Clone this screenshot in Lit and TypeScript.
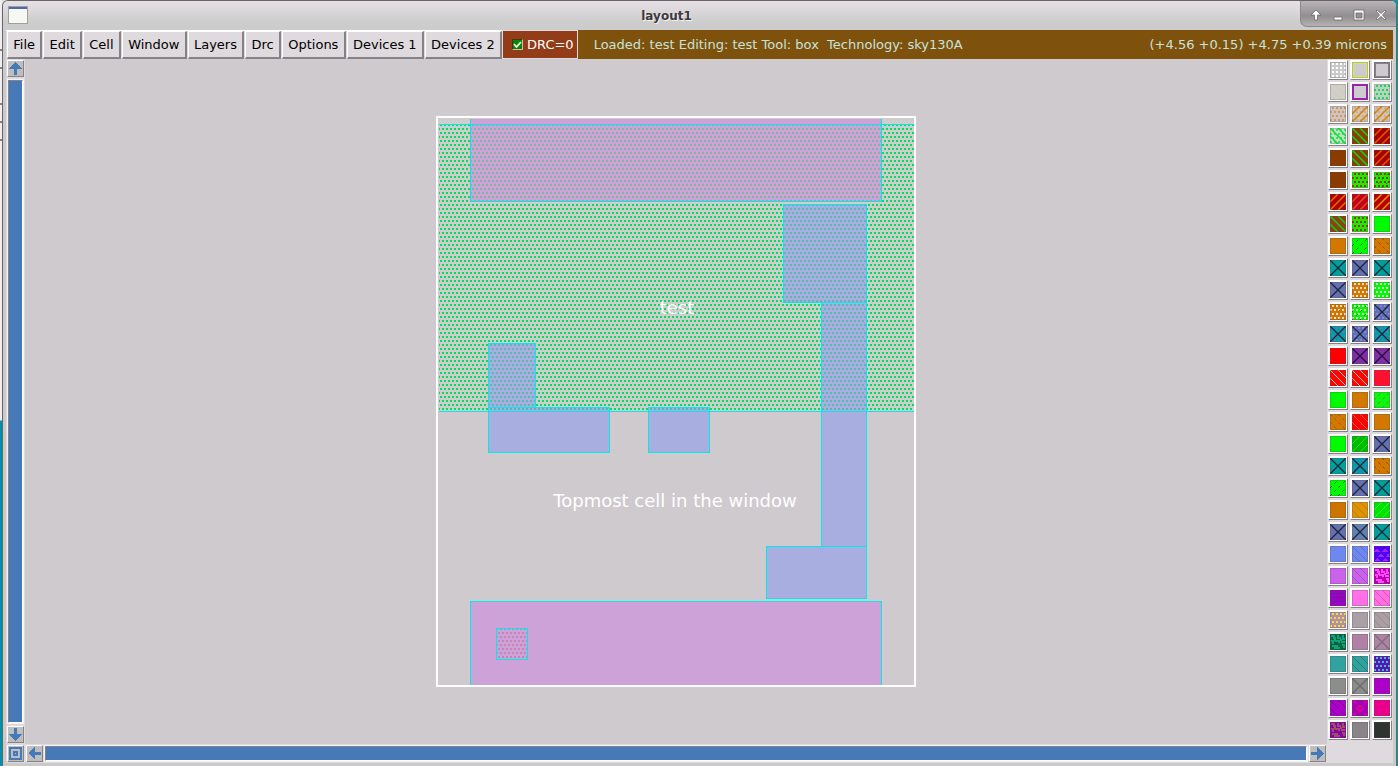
import { LitElement, html, svg, css } from "lit";
import { customElement, state } from "lit/decorators.js";

type Kind =
  | "solid" | "dots" | "grid" | "back" | "fwd" | "cross" | "frame" | "dashFwd" | "dashBack"
  | "xdots" | "fwdDots" | "backDots" | "tri" | "bars" | "ring" | "maze" | "dotDash";
type Swatch = [string, Kind?, string?, string?];

const GREY = "#cfcace";
const TEAL = "#00a09c";
const BLUE = "#6670b0";
const ORANGE = "#d07800";
const GREEN = "#00fa00";
const INK = "#1c2438";

// Background, pattern, pattern colour, and either a second colour or "bold" for wide hatching.
const LAYERS: Swatch[] = [
  ["#cacaca", "grid", "#ffffff"], [GREY, "frame", "#d2e86a"], [GREY, "frame", "#85808a"],
  ["#cfcccc", "back", "#d8dca0"], [GREY, "frame", "#a21cc0"], ["#c4cec4", "dots", "#00e650"],
  ["#cfc4c0", "dots", "#d09a62"], ["#cfc4bc", "fwdDots", "#d88000", "#d6ac84"], ["#cfc4bc", "fwdDots", "#d88000", "#d6ac84"],
  ["#c8dcc8", "backDots", "#00e828", "#30e860"], ["#903c00", "back", "#00e010", "bold"], ["#aa0000", "fwd", "#d86000", "bold"],
  ["#8a3c00"], ["#903c00", "back", "#00e010", "bold"], ["#aa0000", "fwd", "#d86000", "bold"],
  ["#8a3c00"], [GREEN, "dots", "#ee1000"], [GREEN, "dotDash", "#d81800", "#307000"],
  ["#b00000", "fwd", "#e07000", "bold"], ["#c40018", "fwd", "#dc5018", "bold"], ["#b80000", "fwd", "#f09400", "bold"],
  ["#904010", "back", "#00d818", "bold"], [GREEN, "dots", "#ee1000"], [GREEN],
  [ORANGE], [GREEN, "dashFwd", "#106800"], [ORANGE, "dashBack", "#904800"],
  [TEAL, "cross", INK], [BLUE, "cross", INK], [TEAL, "cross", INK],
  [BLUE, "cross", INK], [ORANGE, "dots", "#f0dccc"], [GREEN, "dots", "#d8f4d8"],
  [ORANGE, "dotDash", "#f0dccc", "#a85800"], [GREEN, "dotDash", "#f0d8d8", "#108000"], [BLUE, "xdots", INK, "#7488e8"],
  [TEAL, "xdots", INK, "#5078d8"], [BLUE, "xdots", INK, "#7488e8"], [TEAL, "xdots", INK, "#5078d8"],
  ["#ff0000"], ["#8030a4", "cross", "#26083c"], ["#8030a4", "cross", "#26083c"],
  ["#fa0800", "back", "#e4b8c4"], ["#fa0800", "back", "#e4b8c4"], ["#ff1030"],
  [GREEN], [ORANGE], ["#10f410", "dashFwd", "#00c800"],
  [ORANGE, "dashBack", "#a85800"], ["#ff0000", "back", "#e86030"], [ORANGE],
  [GREEN], ["#00bc00", "fwd", "#10e820"], [BLUE, "cross", INK],
  [TEAL, "cross", INK], [TEAL, "xdots", INK, "#4078d8"], [ORANGE, "dashBack", "#904800"],
  [GREEN, "dashFwd", "#106800"], [BLUE, "cross", INK], [TEAL, "cross", INK],
  ["#cc7400"], ["#de9400", "back", "#c07c10"], ["#00e400", "fwd", "#30f048"],
  [BLUE, "cross", INK], ["#6480b0", "cross", INK], [TEAL, "cross", INK],
  ["#6e88f0"], ["#6e88f0", "back", "#5a70c8"], ["#5000f8", "tri", "#a028ff"],
  ["#ca62ea"], ["#ca62ea", "back", "#ac50cc"], ["#b800b0", "maze", "#ff48ff"],
  ["#a000c4", "bars", "#642098"], ["#ff70e8"], ["#ff70e8", "back", "#f050a8"],
  ["#b48cb8", "dots", "#f0e800"], ["#a8a0a6"], ["#a8a0a6", "back", "#a88870"],
  ["#006830", "maze", "#10a088"], ["#b080a6"], ["#ac84a4", "cross", "#806c7c"],
  ["#30a2a0"], ["#30a2a0", "back", "#288070"], ["#6010b8", "dots", "#20d0b8"],
  ["#8c8e8c"], ["#8c8e8c", "cross", "#686868"], ["#ac00c8"],
  ["#ac00c8", "back", "#8000a0"], ["#a800b8", "ring", "#e00090"], ["#ea008c"],
  ["#9000a0", "maze", "#985070"], ["#888488"], ["#303430"],
];

const dotPath = (stagger: number) =>
  [2, 6, 10, 14].map((y, r) => [0, 4, 8, 12].map((x) => `M${x + (r % 2 ? 2 - stagger : 2)} ${y - 1}h2v2h-2z`).join("")).join("");
const DOTS = dotPath(2);
const GRID = dotPath(0);
const BACK = "M0 0L16 16M8 0L16 8M0 8L8 16";
const FWD = "M0 16L16 0M0 8L8 0M8 16L16 8";
const MAZE = "M1 2h3v2h2M8 1v3h3M13 1v4h2M1 7h2v3M5 7h4v2M11 8h4M2 12h3v3M7 11v3h3M12 11h2v3M5 5v2M10 6h2";

function drawing([, kind = "solid", a = "", b = ""]: Swatch) {
  const line = (d: string, c: string, w = 1, dash = "none", smooth = false) =>
    svg`<path d=${d} stroke=${c} stroke-width=${w} stroke-dasharray=${dash} fill="none"
      shape-rendering=${smooth ? "geometricPrecision" : "inherit"}/>`;
  const hatch = (d: string, c: string, w: number) => line(d, c, w, "none", true);
  const fill = (d: string, c: string) => svg`<path d=${d} fill=${c}/>`;
  const cross = (c: string) => hatch("M0 0L16 16M0 16L16 0", c, 1.3);
  const weight = b === "bold" ? 1.5 : 1;
  switch (kind) {
    case "dots": return fill(DOTS, a);
    case "grid": return fill(GRID, a);
    case "back": return hatch(BACK, a, weight);
    case "fwd": return hatch(FWD, a, weight);
    case "dashFwd": return line(FWD, a, 1, "3 3", true);
    case "dashBack": return line(BACK, a, 1, "3 3", true);
    case "cross": return cross(a);
    case "xdots": return [fill(DOTS, b), cross(a)];
    case "fwdDots": return [fill(DOTS, b), hatch(FWD, a, 1.5)];
    case "backDots": return [fill(DOTS, b), hatch(BACK, a, 1.5)];
    case "dotDash": return [fill(DOTS, a), line(FWD, b, 1, "2 4", true)];
    case "frame": return line("M1 1H15V15H1Z", a, 2);
    case "tri": return fill("M0 6L3 2L6 6ZM8 6L11 2L14 6ZM4 11L7 7L10 11ZM12 11L14 7L16 11ZM0 15L3 12L6 15ZM8 15L11 12L14 15Z", a);
    case "bars": return line("M0 3.5H16M0 7.5H16M0 11.5H16", a);
    case "ring": return fill("M6 5h4v2h-4zM4 7h2v3h-2zM10 7h2v3h-2zM6 10h4v2h-4zM1 1h3v2h-3zM12 1h3v2h-3zM1 13h3v2h-3zM12 13h3v2h-3z", a);
    case "maze": return line(MAZE, a, 1.4);
    default: return "";
  }
}

const ARROWS: Record<string, string> = {
  up: "M7 1L14 8H9V14H6V8H1Z",
  down: "M7 14L14 7H9V1H6V7H1Z",
  left: "M1 7L8 1V6H14V9H8V14Z",
  right: "M14 7L7 1V6H1V9H7V14Z",
};

@customElement("app-root")
export class AppRoot extends LitElement {
  @state() private drc = true;

  static styles = css`
    :host {
      display: grid;
      grid-template-columns: 2px minmax(0, 1fr) 1px;
      height: 100vh;
      overflow: hidden;
      background: linear-gradient(90deg, #dedede 50%, #009aa8 50%);
      font-family: "DejaVu Sans", sans-serif;
      font-size: 13px;
      color: #000;
    }
    button { font: inherit; color: inherit; padding: 0; margin: 0; border-radius: 0; }
    svg { display: block; }
    .behind {
      background: linear-gradient(
        #f0eef0 49px, #858184 49px 51px, #f0eef0 51px 67px, #858184 67px 69px, #f0eef0 69px 103px,
        #858184 103px 105px, #f0eef0 105px 121px, #858184 121px 123px, #f0eef0 123px 139px,
        #858184 139px 141px, #f0eef0 141px 420px, #0090ac 421px);
    }
    .window {
      display: grid;
      grid-template-rows: 29px 29px minmax(0, 1fr) 3px;
      border: 1px solid #666465;
      border-bottom: 0;
      border-radius: 6px 6px 0 0;
      background: #cacaca;
      min-width: 0;
    }
    .title {
      display: grid;
      grid-template-columns: 96px 1fr 96px;
      background: linear-gradient(#e6e0e5, #cccccc 75%);
      border-radius: 5px 5px 0 0;
    }
    .app { margin: 5px 0 0 5px; }
    .title h1 {
      margin: 0;
      font-size: 12px;
      line-height: 30px;
      text-align: center;
      color: #3c3a3c;
      text-shadow: 1px 1px #f2f2f2;
      padding-right: 66px;
    }
    .controls {
      display: flex;
      align-items: center;
      justify-content: space-evenly;
      height: 26px;
      padding-top: 3px;
      background: linear-gradient(#b8b4b7, #928f91 60%, #b4b2b3);
      border-bottom-left-radius: 7px;
      border-top-right-radius: 5px;
      border-left: 1px solid #8a888a;
      border-bottom: 1px solid #8a888a;
      box-sizing: border-box;
    }
    .controls button { border: 0; background: none; }
    .bar { display: flex; margin: 0 3px; background: #dedade; min-width: 0; }
    .menus { display: flex; width: 496px; border-top: 1px solid #fff; box-sizing: border-box; }
    .menu {
      flex: 1 0 auto;
      border: 1px solid;
      border-width: 1px 2px 2px 1px;
      border-color: #fff #858184 #858184 #fff;
      background: #dedade;
      padding: 0 5px;
      margin-left: 1px;
      line-height: 24px;
      white-space: nowrap;
    }
    .drc {
      display: flex;
      align-items: center;
      gap: 4px;
      background: #923c18;
      color: #fff;
      padding: 0 3px 0 9px;
      border: 1px solid #dedade;
      white-space: nowrap;
    }
    .drc input {
      appearance: none;
      width: 11px;
      height: 11px;
      margin: 0;
      background: #008c00;
      border: 1px solid;
      border-color: #543010 #e0b8a0 #e0b8a0 #543010;
    }
    .drc input:checked {
      background: #008c00 url("data:image/svg+xml,%3Csvg xmlns='http://www.w3.org/2000/svg' viewBox='0 0 9 9'%3E%3Cpath d='M1 4l2.5 3L8 2' fill='none' stroke='white' stroke-width='1.8'/%3E%3C/svg%3E");
    }
    .status {
      flex: 1;
      display: flex;
      justify-content: space-between;
      align-items: center;
      background: #7e520c;
      color: #c6e2dc;
      padding: 0 6px 0 16px;
      white-space: pre;
    }
    .work {
      display: grid;
      grid-template-columns: 19px minmax(0, 1fr) 66px;
      margin: 0 3px;
      background: #dedade;
      min-height: 0;
    }
    .vert { display: flex; flex-direction: column; gap: 2px; padding: 1px; }
    .arrow {
      width: 17px;
      height: 17px;
      box-sizing: border-box;
      border: 1px solid;
      border-color: #fff #858184 #858184 #fff;
      background: #bebebe;
      display: grid;
      place-items: center;
      flex: none;
    }
    .thumb {
      flex: 1;
      background: #4679b8;
      border: 2px solid;
      border-color: #858184 #fff #fff #858184;
      outline: 1px solid #f4f2f4;
      outline-offset: -1px;
      box-sizing: border-box;
    }
    .main { display: grid; grid-template-rows: minmax(0, 1fr) 19px; min-height: 0; min-width: 0; }
    .canvas { background: #cfcace; display: grid; place-items: center; overflow: hidden; padding-top: 1px; }
    .horiz { display: flex; gap: 1px; padding: 1px; }
    .palette {
      display: grid;
      grid-template-columns: repeat(3, 20px);
      grid-auto-rows: 20px;
      gap: 2px;
      align-content: start;
      padding: 1px 0 0 1px;
    }
    .layer {
      box-sizing: border-box;
      width: 20px;
      height: 20px;
      border: 1px solid;
      border-color: #fff #858184 #858184 #fff;
      padding: 1px;
      background: #fff;
    }
    .mark { shape-rendering: crispEdges; }
    .label { font: 18px "DejaVu Sans", sans-serif; fill: #fff; text-anchor: middle; }
  `;

  private arrow(dir: string) {
    return html`<button class="arrow" aria-label="Scroll ${dir}">
      <svg class="mark" width="15" height="15"><path d=${ARROWS[dir]} fill="#4679b8" /></svg>
    </button>`;
  }

  private cell() {
    const box = (x: number, y: number, w: number, h: number, fill: string) =>
      svg`<rect x=${x} y=${y} width=${w} height=${h} fill=${fill}/>`;
    const edge = (x: number, y: number, w: number, h: number) =>
      svg`<rect x=${x + 0.5} y=${y + 0.5} width=${w - 1} height=${h - 1} fill="none" stroke="#00ecec"/>`;
    const stipple = (id: string, color: string) =>
      svg`<pattern id=${id} width="4" height="8" patternUnits="userSpaceOnUse">
        <path d="M2 0h2v2h-2zM0 4h2v2h-2z" fill=${color}/></pattern>`;
    const blue = "#a8aee0";
    const purple = "#cda2d8";
    return html`<svg class="mark" width="480" height="572" viewBox="436 116 480 572" role="img" aria-label="Cell layout">
      <defs>
        ${stipple("well", "#00de5a")}${stipple("wellPurple", "#84b49c")}${stipple("wellBlue", "#5cb6b0")}${stipple("contact", "#c884b0")}
      </defs>
      ${box(438, 118, 476, 568, GREY)}
      ${box(439, 119, 475, 292, "#cfcdcd")}
      ${box(439, 124, 476, 287, "url(#well)")}
      ${box(470, 119, 412, 83, purple)}${box(470, 124, 412, 78, "url(#wellPurple)")}
      ${box(783, 204, 84, 99, blue)}${box(783, 204, 84, 99, "url(#wellBlue)")}
      ${box(821, 303, 46, 244, blue)}${box(821, 303, 46, 108, "url(#wellBlue)")}
      ${box(488, 343, 48, 64, blue)}${box(488, 343, 48, 64, "url(#wellBlue)")}
      ${box(488, 407, 122, 46, blue)}${box(488, 407, 122, 4, "url(#wellBlue)")}
      ${box(648, 407, 62, 46, blue)}${box(648, 407, 62, 4, "url(#wellBlue)")}
      ${box(766, 546, 101, 53, blue)}
      ${box(470, 601, 412, 85, purple)}
      ${box(496, 628, 32, 32, "url(#contact)")}
      <path d="M439 124.5H915M439 411.5H915M470.5 119V202M470 201.5H882M881.5 119V202M470.5 686V601.5H881.5V686" stroke="#00ecec" fill="none" />
      ${edge(783, 204, 84, 99)}${edge(821, 302, 46, 245)}${edge(488, 343, 48, 65)}
      ${edge(488, 407, 122, 46)}${edge(648, 407, 62, 46)}${edge(766, 546, 101, 53)}${edge(496, 628, 32, 32)}
      <rect x="437" y="117" width="478" height="569" fill="none" stroke="#fff" stroke-width="2" />
      <text class="label" x="677" y="314">test</text>
      <text class="label" x="675" y="507">Topmost cell in the window</text>
    </svg>`;
  }

  render() {
    const menus = ["File", "Edit", "Cell", "Window", "Layers", "Drc", "Options", "Devices 1", "Devices 2"];
    const controls: [string, string][] = [
      ["Shade", "M6 1L11 6H7.5V11H4.5V6H1Z"],
      ["Minimize", "M2 8H10V11H2Z"],
      ["Maximize", "M1 1H11V11H1ZM3 4V9H9V4Z"],
      ["Close", "M1 2L2 1L6 4.5L10 1L11 2L7.5 6L11 10L10 11L6 7.5L2 11L1 10L4.5 6Z"],
    ];
    return html`
      <div class="behind"></div>
      <main class="window">
        <header class="title">
          <svg class="app" width="20" height="18">
            <rect x="0.5" y="0.5" width="19" height="17" fill="#f6f8f4" stroke="#a0a09c" />
            <path d="M1 2H19" stroke="#4c68b0" stroke-width="2" />
          </svg>
          <h1>layout1</h1>
          <div class="controls">
            ${controls.map(([name, d]) => html`<button aria-label=${name}>
              <svg width="12" height="12"><path d=${d} fill="#fff" fill-rule="evenodd" stroke="#6a686a" stroke-width="0.8" /></svg>
            </button>`)}
          </div>
        </header>
        <nav class="bar">
          <div class="menus">${menus.map((m) => html`<button class="menu">${m}</button>`)}</div>
          <label class="drc"><input type="checkbox" .checked=${this.drc}
            @change=${(e: Event) => (this.drc = (e.target as HTMLInputElement).checked)} />DRC=0</label>
          <div class="status"><span>Loaded: test Editing: test Tool: box  Technology: sky130A</span><span>(+4.56 +0.15) +4.75 +0.39 microns</span></div>
        </nav>
        <section class="work">
          <div class="vert">
            ${this.arrow("up")}
            <div class="thumb"></div>
            ${this.arrow("down")}
            <button class="arrow" aria-label="Zoom to fit">
              <svg class="mark" width="13" height="13"><path d="M0 0h13v13h-13zM2 2v9h9v-9zM4 4h5v5h-5zM6 6v1h1v-1z" fill="#4679b8" fill-rule="evenodd" /></svg>
            </button>
          </div>
          <div class="main">
            <div class="canvas">${this.cell()}</div>
            <div class="horiz">${this.arrow("left")}<div class="thumb"></div>${this.arrow("right")}</div>
          </div>
          <div class="palette">
            ${LAYERS.map((l, i) => html`<button class="layer" aria-label="Layer ${i + 1}">
              <svg class="mark" width="16" height="16">
                <rect width="16" height="16" fill=${l[0]} />${drawing(l)}
                <rect x="0.5" y="0.5" width="15" height="15" fill="none" stroke="#504850" stroke-opacity="0.25" />
              </svg>
            </button>`)}
          </div>
        </section>
      </main>
      <div></div>
    `;
  }
}
